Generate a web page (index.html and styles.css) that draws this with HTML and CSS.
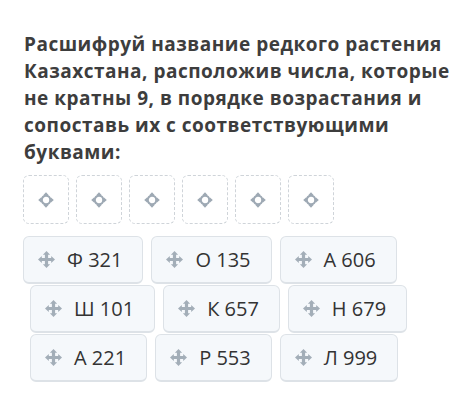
FILE: index.html
```html
<!DOCTYPE html>
<html lang="ru">
  <head>
    <meta charset="UTF-8" />
    <meta name="viewport" content="width=device-width, initial-scale=1.0" />
    <title>Задание</title>
    <link rel="stylesheet" href="styles.css">
  </head>
  <body>
    <div class="task">
      <h2 class="question">
        Расшифруй название редкого растения Казахстана, расположив числа, которые не кратны 9, в порядке возрастания и сопоставь их с соответствующими буквами:
      </h2>

      <div class="slots">
        <div class="slot"><svg class="slot-icon" viewBox="0 0 16 16"><circle cx="8" cy="8" r="4.3" /><path d="M8 0.2l-2.6 2.8h5.2zM8 15.8l-2.6-2.8h5.2zM0.2 8l2.8-2.6v5.2zM15.8 8l-2.8-2.6v5.2z" /></svg></div>
        <div class="slot"><svg class="slot-icon" viewBox="0 0 16 16"><circle cx="8" cy="8" r="4.3" /><path d="M8 0.2l-2.6 2.8h5.2zM8 15.8l-2.6-2.8h5.2zM0.2 8l2.8-2.6v5.2zM15.8 8l-2.8-2.6v5.2z" /></svg></div>
        <div class="slot"><svg class="slot-icon" viewBox="0 0 16 16"><circle cx="8" cy="8" r="4.3" /><path d="M8 0.2l-2.6 2.8h5.2zM8 15.8l-2.6-2.8h5.2zM0.2 8l2.8-2.6v5.2zM15.8 8l-2.8-2.6v5.2z" /></svg></div>
        <div class="slot"><svg class="slot-icon" viewBox="0 0 16 16"><circle cx="8" cy="8" r="4.3" /><path d="M8 0.2l-2.6 2.8h5.2zM8 15.8l-2.6-2.8h5.2zM0.2 8l2.8-2.6v5.2zM15.8 8l-2.8-2.6v5.2z" /></svg></div>
        <div class="slot"><svg class="slot-icon" viewBox="0 0 16 16"><circle cx="8" cy="8" r="4.3" /><path d="M8 0.2l-2.6 2.8h5.2zM8 15.8l-2.6-2.8h5.2zM0.2 8l2.8-2.6v5.2zM15.8 8l-2.8-2.6v5.2z" /></svg></div>
        <div class="slot"><svg class="slot-icon" viewBox="0 0 16 16"><circle cx="8" cy="8" r="4.3" /><path d="M8 0.2l-2.6 2.8h5.2zM8 15.8l-2.6-2.8h5.2zM0.2 8l2.8-2.6v5.2zM15.8 8l-2.8-2.6v5.2z" /></svg></div>
      </div>

      <div class="cards">
        <div class="card-row">
          <div class="card"><svg class="move" viewBox="0 0 16 16"><path d="M8 0l3.4 3.6H9.5v2.9h2.9V4.6L16 8l-3.6 3.4V9.5H9.5v2.9h1.9L8 16l-3.4-3.6h1.9V9.5H3.6v1.9L0 8l3.6-3.4v1.9h2.9V3.6H4.6z" /></svg>Ф 321</div>
          <div class="card"><svg class="move" viewBox="0 0 16 16"><path d="M8 0l3.4 3.6H9.5v2.9h2.9V4.6L16 8l-3.6 3.4V9.5H9.5v2.9h1.9L8 16l-3.4-3.6h1.9V9.5H3.6v1.9L0 8l3.6-3.4v1.9h2.9V3.6H4.6z" /></svg>О 135</div>
          <div class="card"><svg class="move" viewBox="0 0 16 16"><path d="M8 0l3.4 3.6H9.5v2.9h2.9V4.6L16 8l-3.6 3.4V9.5H9.5v2.9h1.9L8 16l-3.4-3.6h1.9V9.5H3.6v1.9L0 8l3.6-3.4v1.9h2.9V3.6H4.6z" /></svg>А 606</div>
        </div>
        <div class="card-row card-row--shift">
          <div class="card"><svg class="move" viewBox="0 0 16 16"><path d="M8 0l3.4 3.6H9.5v2.9h2.9V4.6L16 8l-3.6 3.4V9.5H9.5v2.9h1.9L8 16l-3.4-3.6h1.9V9.5H3.6v1.9L0 8l3.6-3.4v1.9h2.9V3.6H4.6z" /></svg>Ш 101</div>
          <div class="card"><svg class="move" viewBox="0 0 16 16"><path d="M8 0l3.4 3.6H9.5v2.9h2.9V4.6L16 8l-3.6 3.4V9.5H9.5v2.9h1.9L8 16l-3.4-3.6h1.9V9.5H3.6v1.9L0 8l3.6-3.4v1.9h2.9V3.6H4.6z" /></svg>К 657</div>
          <div class="card"><svg class="move" viewBox="0 0 16 16"><path d="M8 0l3.4 3.6H9.5v2.9h2.9V4.6L16 8l-3.6 3.4V9.5H9.5v2.9h1.9L8 16l-3.4-3.6h1.9V9.5H3.6v1.9L0 8l3.6-3.4v1.9h2.9V3.6H4.6z" /></svg>Н 679</div>
        </div>
        <div class="card-row card-row--shift">
          <div class="card"><svg class="move" viewBox="0 0 16 16"><path d="M8 0l3.4 3.6H9.5v2.9h2.9V4.6L16 8l-3.6 3.4V9.5H9.5v2.9h1.9L8 16l-3.4-3.6h1.9V9.5H3.6v1.9L0 8l3.6-3.4v1.9h2.9V3.6H4.6z" /></svg>А 221</div>
          <div class="card"><svg class="move" viewBox="0 0 16 16"><path d="M8 0l3.4 3.6H9.5v2.9h2.9V4.6L16 8l-3.6 3.4V9.5H9.5v2.9h1.9L8 16l-3.4-3.6h1.9V9.5H3.6v1.9L0 8l3.6-3.4v1.9h2.9V3.6H4.6z" /></svg>Р 553</div>
          <div class="card"><svg class="move" viewBox="0 0 16 16"><path d="M8 0l3.4 3.6H9.5v2.9h2.9V4.6L16 8l-3.6 3.4V9.5H9.5v2.9h1.9L8 16l-3.4-3.6h1.9V9.5H3.6v1.9L0 8l3.6-3.4v1.9h2.9V3.6H4.6z" /></svg>Л 999</div>
        </div>
      </div>
    </div>
  </body>
</html>
```

FILE: styles.css
```css
body {
  font-family: "Open Sans", "Noto Sans", sans-serif;
  background: #ffffff;
  margin: 0;
  color: #333;
}

.task {
  padding: 31px 0 0 23px;
}

.question {
  margin: 0 10px 0 1px;
  font-size: 19px;
  line-height: 27px;
  font-weight: 700;
  letter-spacing: 0.5px;
  color: #3d3d3d;
}

.slots {
  display: flex;
  gap: 7px;
  margin-top: 9px;
}

.slot {
  width: 46px;
  height: 49px;
  box-sizing: border-box;
  border: 1px dashed #cfd4d9;
  border-radius: 6px;
  display: flex;
  justify-content: center;
  align-items: center;
}

.slot-icon {
  width: 16px;
  height: 16px;
  fill: #9ea9b4;
}

.slot-icon circle {
  fill: none;
  stroke: #9ea9b4;
  stroke-width: 2.2;
}

.cards {
  margin-top: 12px;
  display: flex;
  flex-direction: column;
  gap: 1px;
}

.card-row {
  display: flex;
  gap: 8px;
}

.card-row--shift {
  margin-left: 7px;
}

.card {
  height: 48px;
  box-sizing: border-box;
  display: flex;
  align-items: center;
  gap: 12px;
  padding: 0 20px 0 14px;
  background: #f5f8fb;
  border: 1px solid #dde2e7;
  border-bottom-width: 2px;
  border-radius: 6px;
  font-size: 20px;
  color: #333;
}

.move {
  width: 17px;
  height: 17px;
  fill: #a3aeb8;
  flex-shrink: 0;
}
```
